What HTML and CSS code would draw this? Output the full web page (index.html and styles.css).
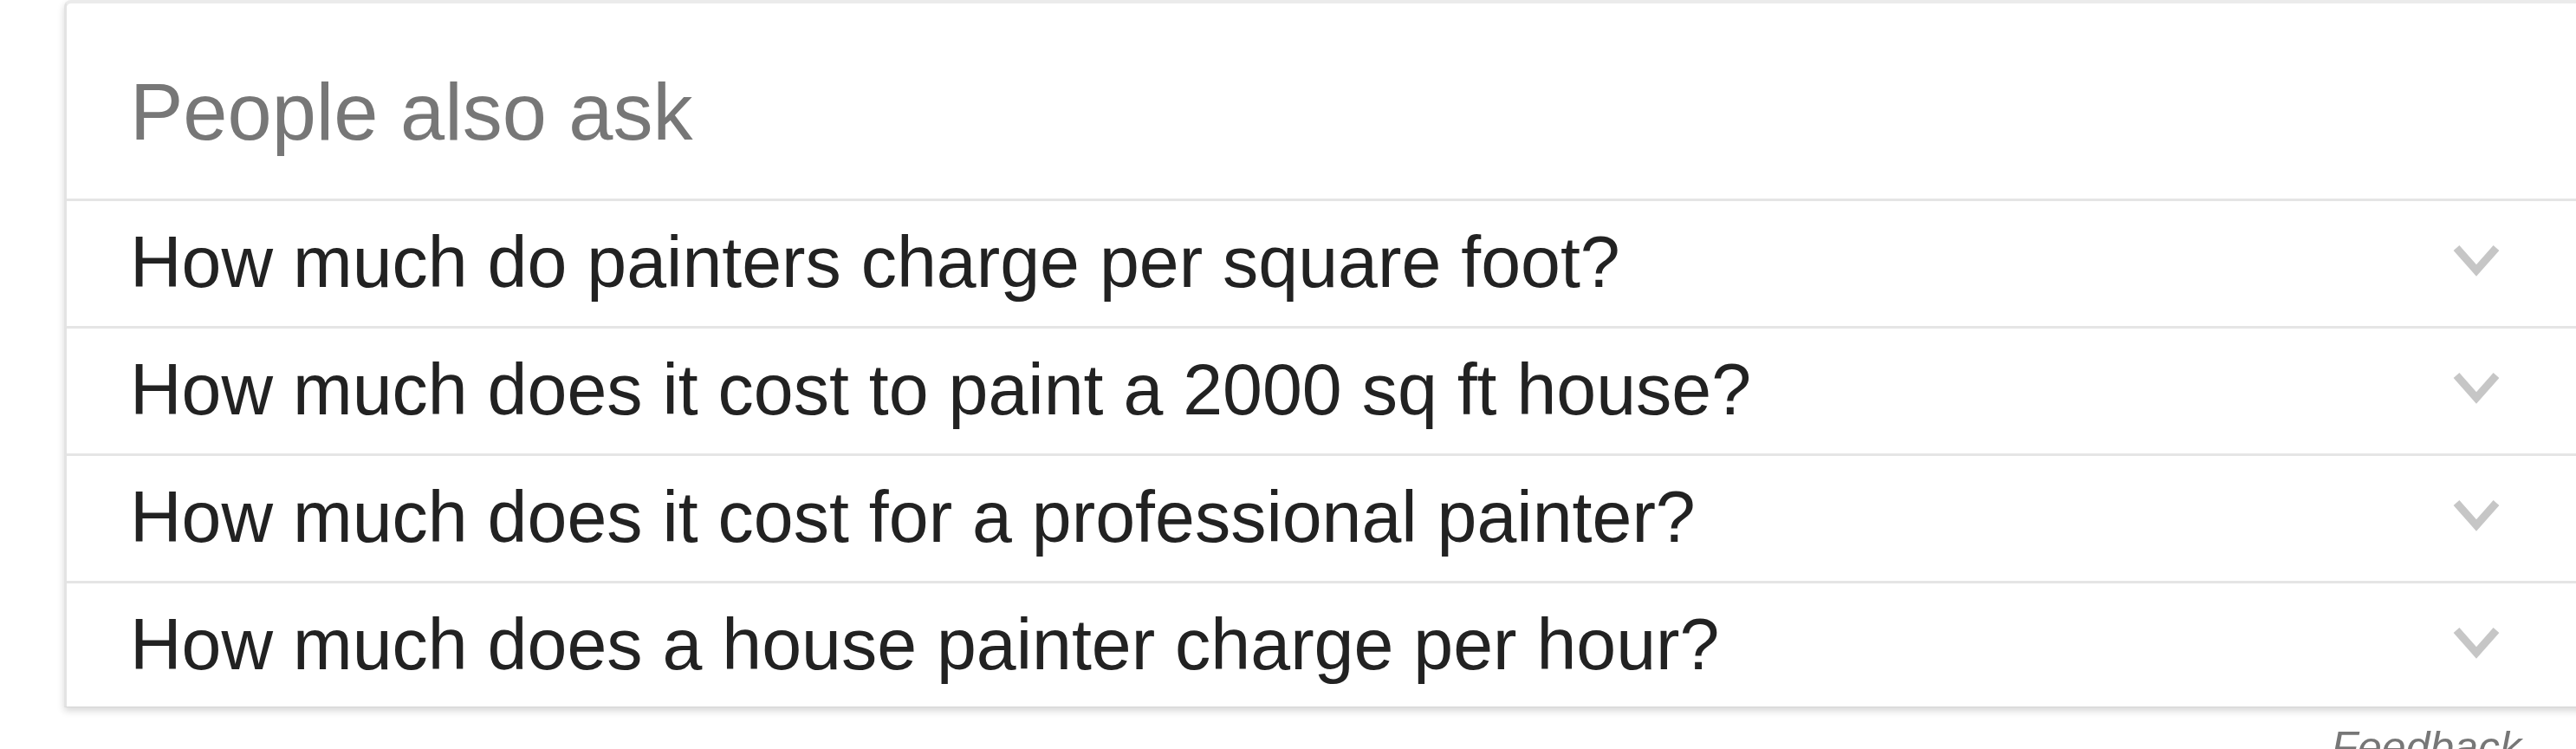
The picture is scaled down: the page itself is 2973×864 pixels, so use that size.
FILE: index.html
```html
<!DOCTYPE html>
<html lang="en">
<head>
<meta charset="utf-8">
<title>People also ask</title>
<link rel="stylesheet" href="styles.css">
</head>
<body>
<div class="card">
  <div class="card-head">People also ask</div>
  <div class="row">
    <span class="q">How much do painters charge per square foot?</span>
    <svg class="chev" viewBox="0 0 54 40" width="54" height="40"><polyline points="4,4 27,30 50,4"/></svg>
  </div>
  <div class="row">
    <span class="q">How much does it cost to paint a 2000 sq ft house?</span>
    <svg class="chev" viewBox="0 0 54 40" width="54" height="40"><polyline points="4,4 27,30 50,4"/></svg>
  </div>
  <div class="row">
    <span class="q">How much does it cost for a professional painter?</span>
    <svg class="chev" viewBox="0 0 54 40" width="54" height="40"><polyline points="4,4 27,30 50,4"/></svg>
  </div>
  <div class="row">
    <span class="q">How much does a house painter charge per hour?</span>
    <svg class="chev" viewBox="0 0 54 40" width="54" height="40"><polyline points="4,4 27,30 50,4"/></svg>
  </div>
</div>
<div class="feedback">Feedback</div>
</body>
</html>
```
FILE: styles.css
```css
html {
  overflow: hidden;
  background: #fff;
}
body {
  margin: 0;
  font-family: "Liberation Sans", Arial, sans-serif;
  background: #fff;
}
.card {
  margin: 0 -20px 0 74px;
  border-top: 4px solid #ebebeb;
  border-left: 3px solid #e3e3e3;
  border-bottom: 1px solid #d6d6d6;
  border-top-left-radius: 8px;
  background: #fff;
  box-shadow: 0 4px 8px rgba(0, 0, 0, 0.16);
}
.card-head {
  padding: 73px 0 48px 73px;
  font-size: 92px;
  line-height: 104px;
  color: #777;
  border-bottom: 3px solid #e5e5e5;
}
.row {
  display: flex;
  align-items: center;
  justify-content: space-between;
  height: 147px;
  box-sizing: border-box;
  padding: 20px 108px 24px 73px;
  border-bottom: 3px solid #e5e5e5;
}
.row:last-child {
  border-bottom: none;
  height: 142px;
  padding-bottom: 22px;
}
.q {
  font-size: 82.5px;
  line-height: 100px;
  color: #222;
  white-space: nowrap;
}
.chev {
  flex: none;
  display: block;
}
.chev polyline {
  fill: none;
  stroke: #c6c6c6;
  stroke-width: 9;
  stroke-linecap: butt;
  stroke-linejoin: miter;
}
.feedback {
  margin: 17px 63px 0 0;
  text-align: right;
  font-size: 50px;
  font-style: italic;
  color: #777;
  line-height: 58px;
}
```
